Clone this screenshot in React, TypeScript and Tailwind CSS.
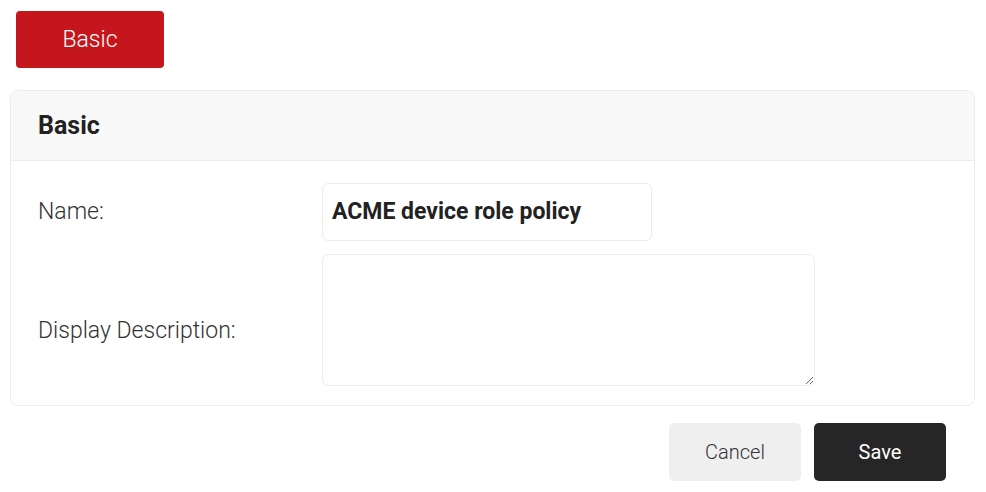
export default function App() {
  return (
    <div className="w-[986px] h-[492px] bg-white" style={{ fontFamily: "Roboto, 'Liberation Sans', sans-serif" }}>
      <div className="pt-[11px] pl-[16px]">
        <button className="w-[148px] h-[57px] rounded-[4px] bg-[#c4161c] text-white text-[23px] font-light pt-[2px]">Basic</button>
      </div>
      <div className="mt-[22px] ml-[10px] w-[965px] h-[316px] rounded-[8px] border border-[#ececec] overflow-hidden">
        <div className="h-[70px] bg-[#f9f9f9] border-b border-[#ececec] flex items-center pl-[27px]">
          <span className="text-[25px] font-bold text-[#222]">Basic</span>
        </div>
        <div className="pl-[27px] pt-[22px]">
          <div className="flex items-center">
            <div className="w-[284px] text-[23px] font-light text-[#333]">Name:</div>
            <div className="w-[330px] h-[58px] rounded-[6px] border border-[#ececec] flex items-center pl-[9px] text-[23px] font-bold text-[#222]">
              ACME device role policy
            </div>
          </div>
          <div className="flex items-center mt-[13px]">
            <div className="w-[284px] text-[23px] font-light text-[#333] mt-[23px]">Display Description:</div>
            <textarea className="w-[493px] h-[132px] rounded-[6px] border border-[#ececec] outline-none" />
          </div>
        </div>
      </div>
      <div className="flex justify-end gap-[13px] mt-[17px] pr-[40px]">
        <button className="w-[132px] h-[58px] rounded-[5px] bg-[#efefef] text-[20px] font-light text-[#333]">Cancel</button>
        <button className="w-[132px] h-[58px] rounded-[5px] bg-[#262626] text-[20px] font-normal text-white">Save</button>
      </div>
    </div>
  );
}
